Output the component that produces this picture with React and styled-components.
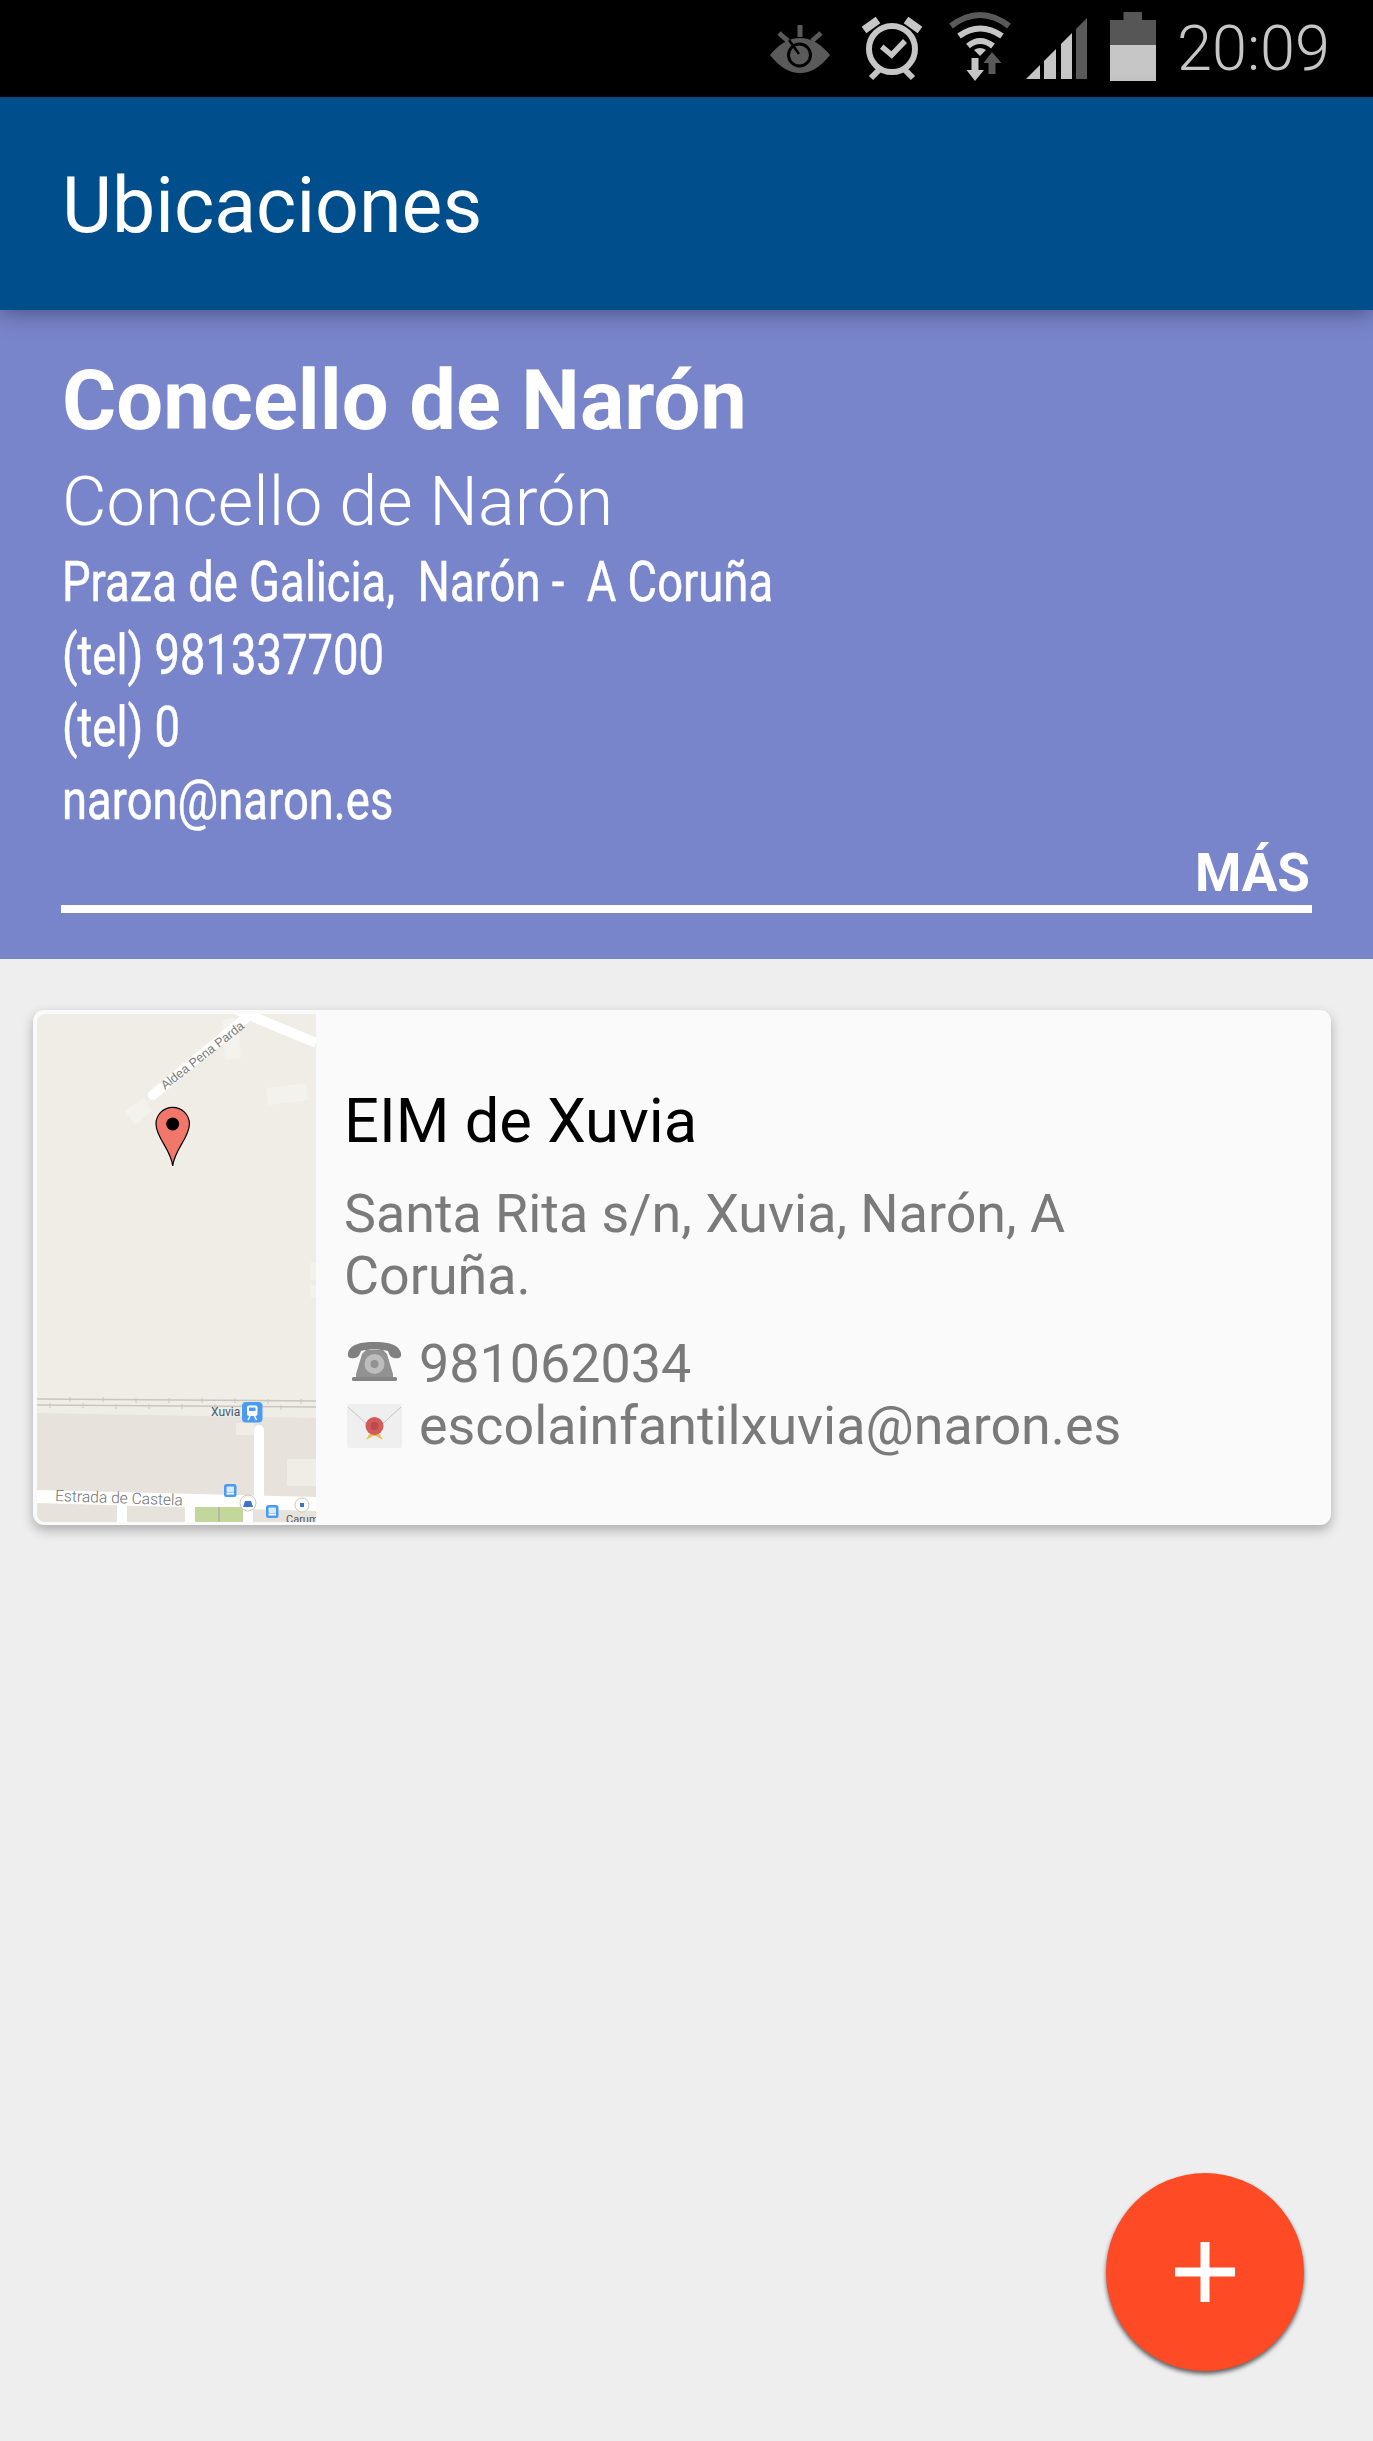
import styled, { createGlobalStyle } from "styled-components";

const GlobalStyle = createGlobalStyle`
  html, body {
    margin: 0;
    padding: 0;
    background: #eeeeee;
    font-family: Roboto, "Liberation Sans", sans-serif;
  }
  * { box-sizing: border-box; }
`;

const Screen = styled.div`
  position: relative;
  width: 1373px;
  height: 2441px;
  overflow: hidden;
  background: #eeeeee;
`;

const StatusBar = styled.div`
  display: flex;
  justify-content: flex-end;
  align-items: center;
  height: 97px;
  padding-right: 43px;
  background: #000;
`;

const StatusIcon = styled.svg`
  display: block;
  flex: none;
  height: 97px;
  margin-left: ${(props) => props.$gap}px;
  filter: blur(0.5px);
`;

const Clock = styled.div`
  margin-left: 21px;
  padding-top: 1px;
  font-size: 63px;
  font-weight: 300;
  line-height: 70px;
  color: #c6c6c6;
`;

const AppBar = styled.header`
  position: relative;
  z-index: 2;
  display: flex;
  align-items: center;
  height: 213px;
  padding: 4px 0 0 62px;
  background: #014e8c;
  box-shadow: 0 3px 22px rgba(0, 0, 0, 0.38);
`;

const AppTitle = styled.h1`
  margin: 0;
  font-size: 77px;
  font-weight: 400;
  color: #fff;
`;

const Banner = styled.section`
  display: flex;
  flex-direction: column;
  height: 649px;
  padding: 44px 61px 0 62px;
  background: #7885cb;
  color: #fff;
`;

const BannerTitle = styled.div`
  font-size: 83px;
  font-weight: 700;
  line-height: 94px;
`;

const BannerSubtitle = styled.div`
  margin: 14px 0 4px;
  font-size: 68.5px;
  font-weight: 300;
  line-height: 80px;
`;

const BannerLine = styled.div`
  font-size: 56px;
  font-weight: 400;
  line-height: 72.5px;
  white-space: pre;
  -webkit-text-stroke: 0.5px #fff;
  transform: scaleX(0.81);
  transform-origin: left center;
`;

const MoreLink = styled.div`
  align-self: flex-end;
  margin: 7px 2px 0 0;
  font-size: 53px;
  font-weight: 700;
  line-height: 60px;
`;

const Divider = styled.div`
  flex: none;
  height: 8px;
  margin: 2px 0 0 -1px;
  background: #fff;
`;

const Card = styled.article`
  display: flex;
  margin: 51px 42px 0 33px;
  padding: 4px 4px 3px;
  border-radius: 11px;
  background: #fafafa;
  box-shadow: 0 5px 12px rgba(0, 0, 0, 0.28);
`;

const MapThumb = styled.svg`
  display: block;
  flex: none;
  width: 279px;
  height: 508px;
  border-radius: 8px 0 0 8px;
`;

const CardBody = styled.div`
  flex: 1;
  padding: 72px 120px 0 28px;
`;

const CardTitle = styled.div`
  font-size: 61.5px;
  line-height: 70px;
  color: #000;
`;

const Address = styled.div`
  margin-top: 27px;
  font-size: 53.8px;
  line-height: 62px;
  color: #7a7a7a;
`;

const ContactList = styled.div`
  margin-top: 26px;
`;

const ContactRow = styled.div`
  display: flex;
  align-items: center;
  height: 62px;
  font-size: 53.8px;
  line-height: 62px;
  color: #7a7a7a;
  white-space: nowrap;
`;

const ContactIcon = styled.svg`
  display: block;
  flex: none;
  width: 55px;
  height: 46px;
  margin: 0 17px 0 3px;
  filter: blur(0.6px);
`;

const Fab = styled.button`
  position: absolute;
  right: 69px;
  bottom: 70px;
  display: flex;
  align-items: center;
  justify-content: center;
  width: 198px;
  height: 198px;
  padding: 0;
  border: 0;
  border-radius: 50%;
  background: #ff4a26;
  box-shadow: 0 3px 4px rgba(0, 0, 0, 0.6);
`;

const light = "#c6c6c6";
const dim = "#5a5a5a";

const EyeIcon = () => (
  <StatusIcon $gap={0} width="60" viewBox="0 0 60 97">
    <path d="M0 55 Q14 38 30 38 Q46 38 60 55 Q46 73 30 73 Q14 73 0 55Z" fill={dim} />
    <circle cx="29.5" cy="55" r="11" fill="none" stroke="#000" strokeWidth="3" />
    <circle cx="30" cy="55" r="4.5" fill={dim} />
    <path d="M29 54 L19 40" stroke="#000" strokeWidth="2.5" />
    <path d="M30 25 V37 M9 33 L18 41 M51 33 L42 41" stroke={dim} strokeWidth="5" />
  </StatusIcon>
);

const AlarmIcon = () => (
  <StatusIcon $gap={32} width="60" viewBox="0 0 60 97">
    <circle cx="30" cy="49" r="23" fill="none" stroke={light} strokeWidth="6" />
    <path d="M19.7 46.7 L29.7 55 L43 41" fill="none" stroke={light} strokeWidth="5.5" />
    <path d="M2 30 L16 20 M58 30 L44 20" stroke={light} strokeWidth="8" />
    <path d="M9 78 L17 70 M51 78 L43 70" stroke={light} strokeWidth="6" />
  </StatusIcon>
);

const WifiIcon = () => (
  <StatusIcon $gap={27} width="62" viewBox="0 0 62 97">
    <path d="M2 26 Q31 4 60 26" fill="none" stroke={dim} strokeWidth="6" />
    <path d="M10 36 Q31 21 53 36" fill="none" stroke={light} strokeWidth="6" />
    <path d="M19 46 Q31 36 44 46" fill="none" stroke={light} strokeWidth="6" />
    <path d="M25 50 Q31 46 37 50 L31 56Z" fill={light} />
    <path d="M22.5 58 H29.5 V70 H35 L26 81 L17.5 70 H22.5Z" fill={light} />
    <path d="M39.5 74 H46.5 V63 H52.5 L43 52 L34.5 63 H39.5Z" fill={dim} />
  </StatusIcon>
);

const SignalIcon = () => (
  <StatusIcon $gap={15} width="61" viewBox="0 0 61 97">
    <path d="M0 79 L14 65 V79Z" fill={light} />
    <path d="M18 61 L30 49 V79 H18Z" fill={light} />
    <path d="M35 44 L46 33 V79 H35Z" fill={light} />
    <path d="M50 29 L61 18 V79 H50Z" fill={dim} />
  </StatusIcon>
);

const BatteryIcon = () => (
  <StatusIcon $gap={23} width="46" viewBox="0 0 46 97">
    <path d="M13.5 12 H32 V20 H46 V45 H0 V20 H13.5Z" fill="#565656" />
    <rect x="0" y="45" width="46" height="36" fill={light} />
  </StatusIcon>
);

const BusStop = ({ x, y }) => (
  <g>
    <rect x={x} y={y} width="12.5" height="13" rx="2.5" fill="#4b9bef" />
    <rect x={x + 2.5} y={y + 2.5} width="7.5" height="5.5" rx="1" fill="#d8e9fb" />
    <rect x={x + 2.5} y={y + 8.5} width="7.5" height="2" fill="#fff" />
  </g>
);

const MapPreview = () => (
  <MapThumb viewBox="0 0 279 508">
    <rect width="279" height="508" fill="#efede6" />
    {/* buildings */}
    <path d="M88 97 L107 84 L115 97 L98 111Z" fill="#f3f2ec" />
    <path d="M229 74 L269 69 L271 86 L231 91Z" fill="#f3f2ec" />
    <path d="M185 6 L200 3 L204 44 L188 46Z" fill="#f3f2ec" />
    <rect x="273" y="249" width="6" height="17" fill="#f3f2ec" />
    <rect x="273" y="271" width="6" height="12" fill="#f3f2ec" />
    {/* roads */}
    <path d="M116 81 L210 3" stroke="#fff" strokeWidth="10" strokeLinecap="round" fill="none" />
    <path d="M200 -4 L279 29" stroke="#fff" strokeWidth="10" fill="none" />
    <text
      x="128"
      y="76"
      transform="rotate(-38 128 76)"
      fontFamily="'Liberation Sans', sans-serif"
      fontSize="12.5"
      fill="#7a7a7a"
    >
      Aldea Pena Parda
    </text>
    {/* railway */}
    <path d="M0 385 L279 387 M0 391 L279 393" stroke="#c8c6bf" strokeWidth="1.4" fill="none" />
    <path
      d="M33 383 V388 M66 383 V388 M99 384 V389 M132 384 V389 M165 384 V389 M198 384 V389 M231 385 V390 M264 385 V390 M13 389 V394 M46 389 V394 M79 390 V395 M112 390 V395 M145 390 V395 M178 390 V395 M244 391 V396"
      stroke="#c8c6bf"
      strokeWidth="1"
    />
    {/* lower blocks */}
    <path d="M0 399 L279 404 V508 H0Z" fill="#e7e3dc" />
    <rect x="199" y="409" width="18" height="12" fill="#efede6" />
    <rect x="250" y="445" width="29" height="27" fill="#efede6" />
    <path d="M0 476 L279 483 V497 L0 489Z" fill="#fff" />
    <path d="M217 416 a5 5 0 0 1 10 0 V490 H217Z" fill="#fff" />
    <rect x="80" y="489" width="10" height="19" fill="#fff" />
    <rect x="148" y="490" width="10" height="18" fill="#fff" />
    <rect x="206" y="490" width="10" height="18" fill="#fff" />
    <rect x="158" y="493" width="48" height="15" fill="#c3d69c" />
    <rect x="181" y="493" width="2" height="15" fill="#b6b9a0" />
    <text
      x="18"
      y="487"
      transform="rotate(2 18 487)"
      fontFamily="Roboto, sans-serif"
      fontWeight="300"
      fontSize="15.6"
      fill="#6f6f6f"
    >
      Estrada de Castela
    </text>
    {/* transit marks */}
    <text x="174" y="402" fontFamily="Roboto, sans-serif" fontSize="12" fill="#3f5878">
      Xuvia
    </text>
    <rect x="205" y="388" width="20.5" height="20.5" rx="4" fill="#4b9bef" />
    <rect x="210" y="391.5" width="10.5" height="10.5" rx="2" fill="#fff" />
    <rect x="212" y="393.5" width="6.5" height="3.5" fill="#4b9bef" />
    <path d="M211 406 L213 402 M219.5 406 L217.5 402" stroke="#fff" strokeWidth="1.5" />
    <BusStop x={187} y={470} />
    <BusStop x={229} y={491} />
    <circle cx="211" cy="489" r="8" fill="#fff" stroke="#c9c6c0" strokeWidth="1" />
    <path d="M206 493 L208 487 H214 L216 493Z" fill="#3f74c4" />
    <circle cx="265" cy="491" r="7" fill="#fff" stroke="#c9c6c0" strokeWidth="1" />
    <rect x="263" y="489" width="4" height="4" fill="#3f74c4" />
    <text x="249" y="509" fontFamily="Roboto, sans-serif" fontSize="11" fill="#555">
      Carum
    </text>
    {/* marker */}
    <path
      d="M135.7 152 C134 135 119 124 119 110 a16.5 16.5 0 0 1 33.4 0 C152.4 124 137.5 135 135.7 152Z"
      fill="#f2776a"
      stroke="#000"
      strokeWidth="1.2"
    />
    <circle cx="135.7" cy="110" r="6.5" fill="#000" />
  </MapThumb>
);

const PhoneIcon = () => (
  <ContactIcon viewBox="0 0 55 46">
    <path d="M1 12 C3 3 15 1 27 1 C40 1 52 3 54 12 C55 17 51 18 47 17 C43 16 42 13 41 10 C33 8 21 8 14 10 C13 13 12 16 8 17 C4 18 0 17 1 12Z" fill="#808080" />
    <path d="M15 13 L19 9 H36 L40 13 L46 33 V38 H9 V33Z" fill="#929292" />
    <circle cx="27.5" cy="23" r="10" fill="#bdbdbd" />
    <circle cx="27.5" cy="23" r="4" fill="#929292" />
    <rect x="5" y="36" width="45" height="4" rx="1.5" fill="#858585" />
  </ContactIcon>
);

const MailIcon = () => (
  <ContactIcon viewBox="0 0 55 46">
    <rect x="0" y="1" width="55" height="44" rx="2" fill="#efefef" />
    <path d="M1 4 L23 24 M54 4 L32 24" stroke="#c4c4c4" strokeWidth="1" fill="none" />
    <path d="M19 37 L24 28 L31 28 L36 37 L29 33 L26 33Z" fill="#eec05c" />
    <circle cx="27.5" cy="23" r="9" fill="#d25a5a" />
    <circle cx="27.5" cy="23" r="4" fill="#bd4a4a" />
  </ContactIcon>
);

const App = () => {
  return (
    <Screen>
      <GlobalStyle />
      <StatusBar>
        <EyeIcon />
        <AlarmIcon />
        <WifiIcon />
        <SignalIcon />
        <BatteryIcon />
        <Clock>20:09</Clock>
      </StatusBar>
      <AppBar>
        <AppTitle>Ubicaciones</AppTitle>
      </AppBar>
      <Banner>
        <BannerTitle>Concello de Narón</BannerTitle>
        <BannerSubtitle>Concello de Narón</BannerSubtitle>
        <BannerLine>Praza de Galicia,  Narón -  A Coruña</BannerLine>
        <BannerLine>(tel) 981337700</BannerLine>
        <BannerLine>(tel) 0</BannerLine>
        <BannerLine>naron@naron.es</BannerLine>
        <MoreLink>MÁS</MoreLink>
        <Divider />
      </Banner>
      <Card>
        <MapPreview />
        <CardBody>
          <CardTitle>EIM de Xuvia</CardTitle>
          <Address>Santa Rita s/n, Xuvia, Narón, A Coruña.</Address>
          <ContactList>
            <ContactRow>
              <PhoneIcon />
              981062034
            </ContactRow>
            <ContactRow>
              <MailIcon />
              escolainfantilxuvia@naron.es
            </ContactRow>
          </ContactList>
        </CardBody>
      </Card>
      <Fab>
        <svg width="60" height="60" viewBox="0 0 60 60">
          <path d="M25.5 0 H34.5 V25.5 H60 V34.5 H34.5 V60 H25.5 V34.5 H0 V25.5 H25.5Z" fill="#fff" />
        </svg>
      </Fab>
    </Screen>
  );
};

export default App;
